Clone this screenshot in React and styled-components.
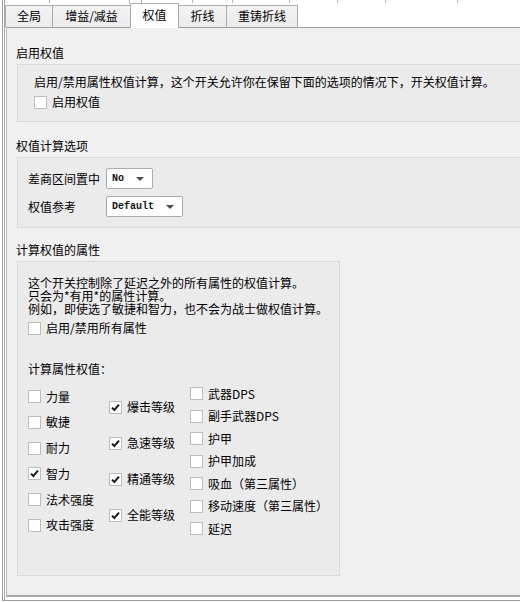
import React from 'react';
import styled, { createGlobalStyle } from 'styled-components';

const Global = createGlobalStyle`
  html, body { margin: 0; padding: 0; background: #fff; }
  body {
    font-family: "Noto Sans CJK SC", "Noto Sans", sans-serif;
    font-size: 12px;
    color: #000;
  }
  * { box-sizing: border-box; }
`;

const Page = styled.div`
  width: 520px;
  height: 602px;
  overflow: hidden;
  background: #fff;
  display: flex;
`;

const Frame = styled.div`
  flex: 1;
  margin-left: 2px;
  height: 601px;
  border-left: 1px solid #a0a0a0;
  border-bottom: 1px solid #a0a0a0;
  padding-left: 1px;
  display: flex;
`;

const Inner = styled.div`
  flex: 1;
  height: 600px;
  border-left: 1px solid #a8a8a8;
  padding-bottom: 3px;
  display: flex;
  flex-direction: column;
  min-width: 0;
`;

const TopStrip = styled.div`
  height: 3px;
  display: flex;
`;

const Stub = styled.div`
  width: ${p => p.w}px;
  flex: none;
  border-right: 1px solid #b4b4b4;
`;

const TabBar = styled.div`
  height: 24px;
  display: flex;
  align-items: flex-end;
  position: relative;
  z-index: 2;
`;

const Tab = styled.div`
  width: ${p => p.w}px;
  flex: none;
  height: ${p => (p.active ? 25 : 22)}px;
  margin-left: ${p => (p.first ? 0 : -1)}px;
  margin-bottom: ${p => (p.active ? -1 : 0)}px;
  border: 1px solid #acacac;
  border-bottom: none;
  background: ${p => (p.active ? '#fff' : 'linear-gradient(#f3f3f3, #ebebeb)')};
  position: relative;
  z-index: ${p => (p.active ? 2 : 1)};
  display: flex;
  align-items: center;
  justify-content: center;
  line-height: 14px;
  padding-bottom: ${p => (p.active ? 3 : 1)}px;
`;

const Pane = styled.div`
  flex: 1;
  margin-left: 1px;
  background: #f0f0f0;
  border-top: 1px solid #a0a0a0;
  border-left: 1px solid #b9b9b9;
  border-bottom: 2px solid #a8a8a8;
  overflow: hidden;
  padding-top: 17px;
  display: flex;
  flex-direction: column;
`;

const Section = styled.section`
  margin-top: ${p => p.top || 0}px;
  display: flex;
  flex-direction: column;
`;

const Heading = styled.div`
  padding-left: 9px;
  line-height: 16px;
  height: 16px;
`;

const Group = styled.div`
  margin-top: 3px;
  margin-left: 10px;
  width: ${p => (p.w ? `${p.w}px` : 'auto')};
  margin-right: ${p => (p.w ? 0 : -20)}px;
  background: #ebebeb;
  border: 1px solid #d9d9d9;
  padding: ${p => p.pad};
  display: flex;
  flex-direction: column;
`;

const Line = styled.div`
  line-height: ${p => p.lh || 13}px;
  margin-top: ${p => p.mt || 0}px;
  white-space: nowrap;
`;

const CheckRow = styled.label`
  display: flex;
  align-items: center;
  gap: 5px;
  height: 14px;
  line-height: 14px;
  margin-top: ${p => p.mt || 0}px;
  white-space: nowrap;
`;

const Box = styled.span`
  width: 13px;
  height: 13px;
  flex: none;
  background: #fff;
  border: 1px solid #bdbdbd;
  display: flex;
  align-items: center;
  justify-content: center;
`;

const Check = ({ checked, label, mt }) => (
  <CheckRow mt={mt}>
    <Box>
      {checked && (
        <svg width="11" height="11" viewBox="0 0 11 11">
          <path d="M2 5.6 L4.3 8 L9 2.6" fill="none" stroke="#1a1a1a" strokeWidth="2" />
        </svg>
      )}
    </Box>
    <span>{label}</span>
  </CheckRow>
);

const FormGrid = styled.div`
  display: grid;
  grid-template-columns: 78px auto;
  row-gap: 7px;
  align-items: center;
  justify-items: start;
`;

const Select = styled.div`
  width: ${p => p.w}px;
  height: 21px;
  background: #fff;
  border: 1px solid #acacac;
  border-radius: 2px;
  display: flex;
  align-items: center;
  justify-content: space-between;
  padding: 0 8px 0 5px;
  font-family: "Liberation Mono", "DejaVu Sans Mono", monospace;
  font-size: 10px;
  font-weight: bold;
  color: #111;
`;

const Arrow = styled.span`
  width: 0;
  height: 0;
  border-left: 4px solid transparent;
  border-right: 4px solid transparent;
  border-top: 4px solid #4a4a4a;
`;

const Columns = styled.div`
  display: flex;
  height: 166px;
  margin-top: 3px;
`;

const Col = styled.div`
  width: ${p => (p.w ? `${p.w}px` : 'auto')};
  flex: ${p => (p.w ? 'none' : 1)};
  display: flex;
  flex-direction: column;
  justify-content: space-evenly;
`;

const col1 = [['力量'], ['敏捷'], ['耐力'], ['智力', true], ['法术强度'], ['攻击强度']];
const col2 = [['爆击等级', true], ['急速等级', true], ['精通等级', true], ['全能等级', true]];
const col3 = [['武器DPS'], ['副手武器DPS'], ['护甲'], ['护甲加成'], ['吸血（第三属性）'], ['移动速度（第三属性）'], ['延迟']];

export default function App() {
  return (
    <Page>
      <Global />
      <Frame>
        <Inner>
          <TopStrip>
            <Stub w={45} />
            <Stub w={80} />
            <Stub w={12} />
            <Stub w={51} />
            <Stub w={40} />
            <Stub w={57} />
            <Stub w={48} />
            <Stub w={48} />
            <Stub w={72} />
          </TopStrip>
          <TabBar>
            <Tab first w={48}>全局</Tab>
            <Tab w={79}>增益/减益</Tab>
            <Tab active w={49}>权值</Tab>
            <Tab w={49}>折线</Tab>
            <Tab w={72}>重铸折线</Tab>
          </TabBar>
          <Pane>
            <Section>
              <Heading>启用权值</Heading>
              <Group pad="10px 16px 12px 16px">
                <Line lh={14}>启用/禁用属性权值计算，这个开关允许你在保留下面的选项的情况下，开关权值计算。</Line>
                <Check mt={6} label="启用权值" />
              </Group>
            </Section>
            <Section top={16}>
              <Heading>权值计算选项</Heading>
              <Group pad="10px 10px 10px 10px">
                <FormGrid>
                  <span>差商区间置中</span>
                  <Select w={47}>No<Arrow /></Select>
                  <span>权值参考</span>
                  <Select w={77}>Default<Arrow /></Select>
                </FormGrid>
              </Group>
            </Section>
            <Section top={14}>
              <Heading>计算权值的属性</Heading>
              <Group w={323} pad="14px 10px 31px 10px">
                <Line>这个开关控制除了延迟之外的所有属性的权值计算。</Line>
                <Line>只会为*有用*的属性计算。</Line>
                <Line>例如，即使选了敏捷和智力，也不会为战士做权值计算。</Line>
                <Check mt={6} label="启用/禁用所有属性" />
                <Line mt={27}>计算属性权值：</Line>
                <Columns>
                  <Col w={81}>
                    {col1.map(([l, c]) => <Check key={l} label={l} checked={c} />)}
                  </Col>
                  <Col w={81}>
                    {col2.map(([l, c]) => <Check key={l} label={l} checked={c} />)}
                  </Col>
                  <Col>
                    {col3.map(([l, c]) => <Check key={l} label={l} checked={c} />)}
                  </Col>
                </Columns>
              </Group>
            </Section>
          </Pane>
        </Inner>
      </Frame>
    </Page>
  );
}
